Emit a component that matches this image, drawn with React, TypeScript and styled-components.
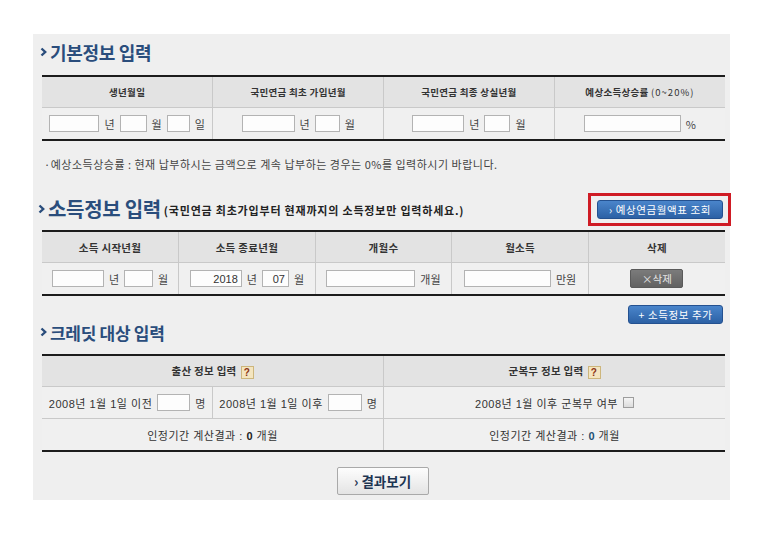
import styled, { createGlobalStyle } from "styled-components";

const GlobalStyle = createGlobalStyle`
  body {
    margin: 0;
    background: #ffffff;
    font-family: "Liberation Sans", "Noto Sans CJK KR", sans-serif;
    color: #333;
  }
`;

const Panel = styled.div`
  box-sizing: border-box;
  width: 697px;
  height: 466px;
  margin: 34px 0 0 33px;
  padding: 6px 5px 0 9px;
  background: #efefef;
`;

const TitleRow = styled.div<{ $h: number; $mt: number; $mb: number }>`
  display: flex;
  align-items: center;
  justify-content: space-between;
  width: 683px;
  height: ${(p) => p.$h}px;
  margin-top: ${(p) => p.$mt}px;
  margin-bottom: ${(p) => p.$mb}px;
`;

const TitleGroup = styled.div`
  display: flex;
  align-items: center;
  margin-left: -2px;
`;

const Title = styled.h2<{ $size: number }>`
  margin: 0 0 0 3px;
  font-family: "Noto Sans CJK KR", sans-serif;
  font-size: ${(p) => p.$size}px;
  font-weight: 700;
  line-height: 1;
  color: #2a4d7c;
  letter-spacing: -0.3px;
`;

const Sub = styled.span`
  margin-left: 3px;
  margin-top: 2px;
  font-family: "Noto Sans CJK KR", sans-serif;
  font-size: 11px;
  font-weight: 700;
  letter-spacing: 0.8px;
  color: #222;
`;

const FormTable = styled.table<{ $head: number }>`
  width: 683px;
  table-layout: fixed;
  border-collapse: collapse;
  border-top: 2px solid #1c1c1c;
  border-bottom: 2px solid #1c1c1c;
  font-size: ${(p) => p.$head}px;
`;

const Th = styled.th`
  height: 30px;
  padding: 0;
  background: #e3e3e3;
  border: 1px solid #c9c9c9;
  border-top: none;
  font-family: "Noto Sans CJK KR", sans-serif;
  font-size: inherit;
  font-weight: 700;
  letter-spacing: 0.3px;
  color: #333;
  text-align: center;
  &:first-child { border-left: none; }
  &:last-child { border-right: none; }
`;

const Td = styled.td`
  height: 31px;
  padding: 0;
  background: #f0f0f0;
  border: 1px solid #c9c9c9;
  font-size: 11px;
  letter-spacing: 0.5px;
  color: #333;
  text-align: center;
  &:first-child { border-left: none; }
  &:last-child { border-right: none; }
`;

const Fields = styled.div`
  display: flex;
  align-items: center;
  justify-content: center;
  gap: 5px;
`;

const Box = styled.input<{ $w: number }>`
  box-sizing: border-box;
  width: ${(p) => p.$w}px;
  height: 17px;
  padding: 0 3px;
  border: 1px solid #b3b3b3;
  background: #fdfdfd;
  font-family: "Liberation Sans", sans-serif;
  font-size: 11px;
  color: #333;
  text-align: right;
  outline: none;
`;

const Unit = styled.span`
  font-family: "Noto Sans CJK KR", sans-serif;
  font-size: 11px;
  letter-spacing: 0;
  color: #444;
`;

const Paren = styled.span`
  font-weight: 400;
  letter-spacing: 1px;
`;

const Note = styled.p`
  margin: 15px 0 0 2px;
  font-family: "Noto Sans CJK KR", sans-serif;
  font-size: 11px;
  line-height: 16px;
  letter-spacing: 0.5px;
  color: #444;
`;

const RedFrame = styled.div`
  box-sizing: border-box;
  display: flex;
  margin-right: -6px;
  padding: 4px 5px 4px 6px;
  border: 3px solid #cf1b24;
`;

const BlueButton = styled.button<{ $w: number }>`
  width: ${(p) => p.$w}px;
  height: 19px;
  padding: 0;
  border: 1px solid #245190;
  border-radius: 3px;
  background: linear-gradient(#4a85cb, #2c61a5);
  font-family: "Noto Sans CJK KR", sans-serif;
  font-size: 10.5px;
  line-height: 17px;
  letter-spacing: 0.6px;
  color: #fff;
`;

const DeleteButton = styled.button`
  width: 53px;
  height: 19px;
  padding: 0;
  border: 1px solid #5a5a5a;
  border-radius: 2px;
  background: linear-gradient(#7b7b7b, #626262);
  font-family: "Noto Sans CJK KR", sans-serif;
  font-size: 10.5px;
  line-height: 17px;
  color: #e6e6e6;
`;

const ActionRow = styled.div<{ $mt: number; $align: string }>`
  display: flex;
  justify-content: ${(p) => p.$align};
  width: 681px;
  margin-top: ${(p) => p.$mt}px;
  padding-right: 2px;
`;

const ResultButton = styled.button`
  width: 92px;
  height: 28px;
  padding: 0;
  border: 1px solid #a9a9a9;
  border-radius: 2px;
  background: linear-gradient(#fdfdfd, #e4e4e4);
  font-family: "Noto Sans CJK KR", sans-serif;
  font-size: 13.5px;
  font-weight: 700;
  color: #1d3552;
`;

const Help = styled.span`
  display: inline-flex;
  align-items: center;
  justify-content: center;
  box-sizing: border-box;
  width: 13px;
  height: 13px;
  margin-left: 4px;
  vertical-align: middle;
  border: 1px solid #cdb67c;
  background: #f4e5bf;
  font-family: "Liberation Sans", sans-serif;
  font-size: 10px;
  font-weight: 700;
  color: #8c3414;
`;

const Check = styled.input`
  appearance: none;
  box-sizing: border-box;
  width: 11px;
  height: 11px;
  margin: 0;
  border: 1px solid #9d9d9d;
  background: linear-gradient(#f5f5f5, #dcdcdc);
`;

const Strong = styled.b<{ $color?: string }>`
  color: ${(p) => p.$color ?? "#222"};
`;

function Chevron() {
  return (
    <svg width="7" height="10" viewBox="0 0 7 10">
      <polyline points="1.5,1.5 5.2,5 1.5,8.5" fill="none" stroke="#2a4d7c" strokeWidth="2.4" />
    </svg>
  );
}

function SectionTitle({ text, size }: { text: string; size: number }) {
  return (
    <TitleGroup>
      <Chevron />
      <Title $size={size}>{text}</Title>
    </TitleGroup>
  );
}

function App() {
  return (
    <>
      <GlobalStyle />
      <Panel>
        <TitleRow $h={24} $mt={0} $mb={11}>
          <SectionTitle text="기본정보 입력" size={18} />
        </TitleRow>
        <FormTable $head={9.5}>
          <thead>
            <tr>
              <Th>생년월일</Th>
              <Th>국민연금 최초 가입년월</Th>
              <Th>국민연금 최종 상실년월</Th>
              <Th>예상소득상승률 <Paren>(0~20%)</Paren></Th>
            </tr>
          </thead>
          <tbody>
            <tr>
              <Td>
                <Fields>
                  <Box $w={50} /><Unit>년</Unit>
                  <Box $w={27} /><Unit>월</Unit>
                  <Box $w={23} /><Unit>일</Unit>
                </Fields>
              </Td>
              <Td>
                <Fields>
                  <Box $w={53} /><Unit>년</Unit>
                  <Box $w={25} /><Unit>월</Unit>
                </Fields>
              </Td>
              <Td>
                <Fields>
                  <Box $w={52} /><Unit>년</Unit>
                  <Box $w={26} /><Unit>월</Unit>
                </Fields>
              </Td>
              <Td>
                <Fields>
                  <Box $w={97} /><Unit>%</Unit>
                </Fields>
              </Td>
            </tr>
          </tbody>
        </FormTable>

        <Note>·예상소득상승률 : 현재 납부하시는 금액으로 계속 납부하는 경우는 0%를 입력하시기 바랍니다.</Note>

        <TitleRow $h={32} $mt={21} $mb={5}>
          <TitleGroup>
            <SectionTitle text="소득정보 입력" size={20} />
            <Sub>(국민연금 최초가입부터 현재까지의 소득정보만 입력하세요.)</Sub>
          </TitleGroup>
          <RedFrame>
            <BlueButton $w={126}>› 예상연금월액표 조회</BlueButton>
          </RedFrame>
        </TitleRow>
        <FormTable $head={10.5}>
          <thead>
            <tr>
              <Th>소득 시작년월</Th>
              <Th>소득 종료년월</Th>
              <Th>개월수</Th>
              <Th>월소득</Th>
              <Th>삭제</Th>
            </tr>
          </thead>
          <tbody>
            <tr>
              <Td>
                <Fields>
                  <Box $w={52} /><Unit>년</Unit>
                  <Box $w={29} /><Unit>월</Unit>
                </Fields>
              </Td>
              <Td>
                <Fields>
                  <Box $w={52} defaultValue="2018" /><Unit>년</Unit>
                  <Box $w={27} defaultValue="07" /><Unit>월</Unit>
                </Fields>
              </Td>
              <Td>
                <Fields>
                  <Box $w={89} /><Unit>개월</Unit>
                </Fields>
              </Td>
              <Td>
                <Fields>
                  <Box $w={87} /><Unit>만원</Unit>
                </Fields>
              </Td>
              <Td>
                <DeleteButton>×삭제</DeleteButton>
              </Td>
            </tr>
          </tbody>
        </FormTable>

        <ActionRow $mt={9} $align="flex-end">
          <BlueButton $w={95}>+ 소득정보 추가</BlueButton>
        </ActionRow>

        <TitleRow $h={24} $mt={-4} $mb={10}>
          <SectionTitle text="크레딧 대상 입력" size={17} />
        </TitleRow>
        <FormTable $head={10.5}>
          <thead>
            <tr>
              <Th colSpan={2}>출산 정보 입력<Help>?</Help></Th>
              <Th colSpan={2}>군복무 정보 입력<Help>?</Help></Th>
            </tr>
          </thead>
          <tbody>
            <tr>
              <Td>
                <Fields>
                  <span>2008년 1월 1일 이전</span>
                  <Box $w={33} /><Unit>명</Unit>
                </Fields>
              </Td>
              <Td>
                <Fields>
                  <span>2008년 1월 1일 이후</span>
                  <Box $w={34} /><Unit>명</Unit>
                </Fields>
              </Td>
              <Td colSpan={2}>
                <Fields>
                  <span>2008년 1월 이후 군복무 여부</span>
                  <Check type="checkbox" />
                </Fields>
              </Td>
            </tr>
            <tr>
              <Td colSpan={2}>인정기간 계산결과 : <Strong>0</Strong> 개월</Td>
              <Td colSpan={2}>인정기간 계산결과 : <Strong $color="#1f4f73">0</Strong> 개월</Td>
            </tr>
          </tbody>
        </FormTable>

        <ActionRow $mt={15} $align="center">
          <ResultButton>› 결과보기</ResultButton>
        </ActionRow>
      </Panel>
    </>
  );
}

export default App;
